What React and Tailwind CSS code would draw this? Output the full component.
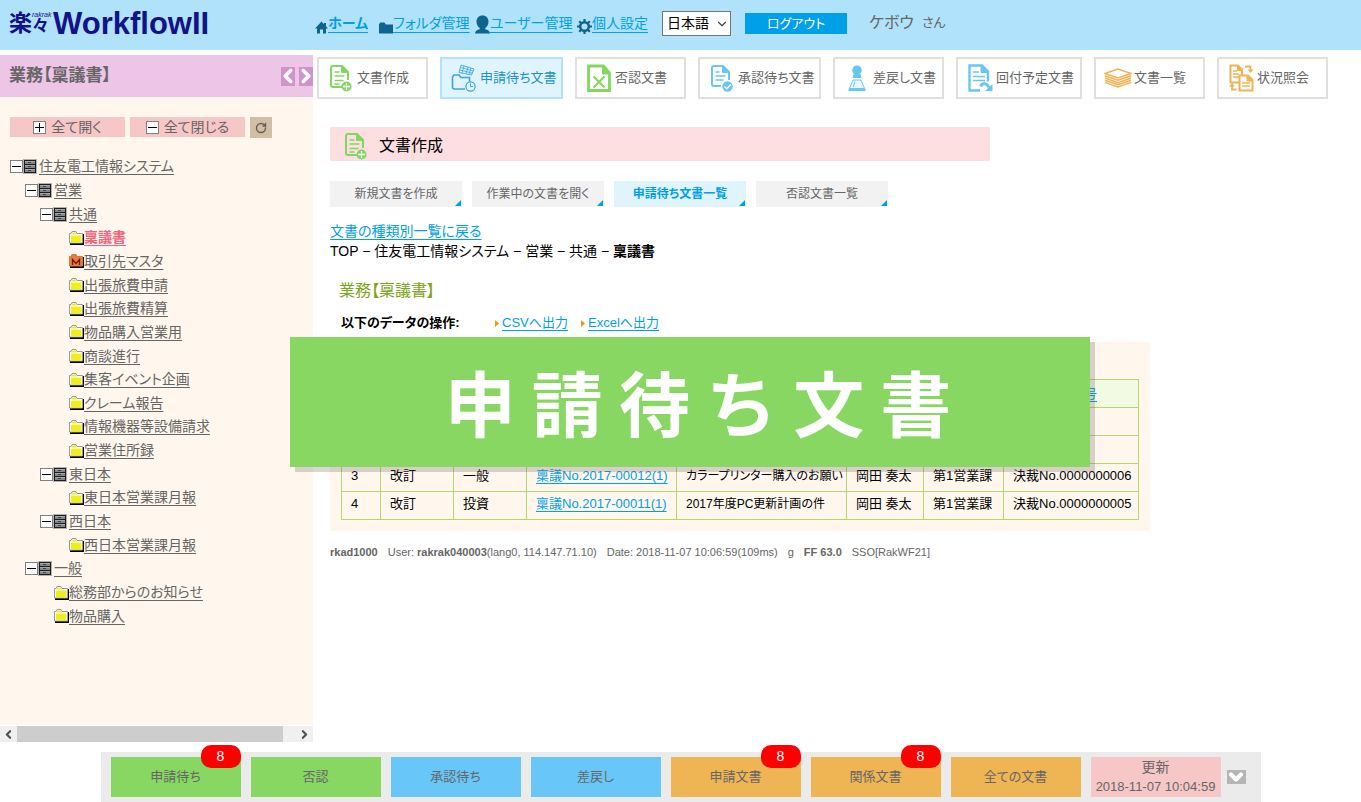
import React from 'react';
import { clsx } from 'clsx';
import { ChevronLeft, ChevronRight, ChevronDown, RotateCw } from 'lucide-react';

const tree = [
  { level: 0, type: 'cabinet', name: '住友電工情報システム' },
  { level: 1, type: 'cabinet', name: '営業' },
  { level: 2, type: 'cabinet', name: '共通' },
  { level: 3, type: 'folder', name: '稟議書', active: true },
  { level: 3, type: 'master', name: '取引先マスタ' },
  { level: 3, type: 'folder', name: '出張旅費申請' },
  { level: 3, type: 'folder', name: '出張旅費精算' },
  { level: 3, type: 'folder', name: '物品購入営業用' },
  { level: 3, type: 'folder', name: '商談進行' },
  { level: 3, type: 'folder', name: '集客イベント企画' },
  { level: 3, type: 'folder', name: 'クレーム報告' },
  { level: 3, type: 'folder', name: '情報機器等設備請求' },
  { level: 3, type: 'folder', name: '営業住所録' },
  { level: 2, type: 'cabinet', name: '東日本' },
  { level: 3, type: 'folder', name: '東日本営業課月報' },
  { level: 2, type: 'cabinet', name: '西日本' },
  { level: 3, type: 'folder', name: '西日本営業課月報' },
  { level: 1, type: 'cabinet', name: '一般' },
  { level: 2, type: 'folder', name: '総務部からのお知らせ' },
  { level: 2, type: 'folder', name: '物品購入' },
];

const indents = ['pl-[10px]', 'pl-[25px]', 'pl-[40px]', 'pl-[69px]'];
const leafIndents = ['pl-[10px]', 'pl-[39px]', 'pl-[54px]', 'pl-[69px]'];

const rows = [
  ['1', '', '', '', '', '', '', ''],
  ['2', '', '', '', '', '', '', ''],
  ['3', '改訂', '一般', '稟議No.2017-00012(1)', 'カラープリンター購入のお願い', '岡田 奏太', '第1営業課', '決裁No.0000000006'],
  ['4', '改訂', '投資', '稟議No.2017-00011(1)', '2017年度PC更新計画の件', '岡田 奏太', '第1営業課', '決裁No.0000000005'],
];

/* ---------- icons ---------- */

const BoxIcon = ({ plus }) => (
  <svg width="13" height="13" viewBox="0 0 13 13" className="shrink-0" shapeRendering="crispEdges">
    <rect x="0.5" y="0.5" width="12" height="12" rx="1" fill="#fff" stroke="#808080" />
    <path d={plus ? 'M2 6.5h9M6.5 2v9' : 'M2 6.5h9'} stroke="#000" />
  </svg>
);

const CabinetIcon = () => (
  <svg width="14" height="15" viewBox="0 0 14 15" className="shrink-0">
    <rect width="14" height="15" fill="#b4b0ac" />
    <rect x="1" y="1" width="12" height="13" fill="#1d1d1f" />
    <path d="M2 2h10v3H2zM2 6h10v3H2zM2 10h10v3H2z" fill="#858588" />
    <path d="M2 2h10v1H2zM2 6h10v1H2zM2 10h10v1H2z" fill="#a7a7aa" />
    <path d="M5 3h3v1H5zM5 7h3v1H5zM5 11h3v1H5z" fill="#30485f" />
  </svg>
);

const FolderIcon = () => (
  <svg width="15" height="14" viewBox="0 0 15 14" className="shrink-0">
    <path d="M1 14h14V3h-2v9H1z" fill="#000" />
    <path d="M0.5 12V2.5H2L3 0.5h4l1 2h5.5V12z" fill="#fff" stroke="#9a9a9a" />
    <path d="M3 1.5h4l1 2h-6z" fill="#e9e64a" />
    <path d="M2 4.500h10.500V11.500H2z" fill="#f2ee1c" />
  </svg>
);

const MasterIcon = () => (
  <svg width="15" height="14" viewBox="0 0 15 14" className="shrink-0">
    <path d="M1 14h14V3h-2v9H1z" fill="#000" />
    <path d="M0.5 12V2.5H2L3 0.5h4l1 2h5.500V12z" fill="#e08040" stroke="#d9763a" />
    <path d="M3.500 11V5.500l3.500 4 3.500-4V11" fill="none" stroke="#8a0f0f" strokeWidth="1.300" />
  </svg>
);

const HomeIcon = () => (
  <svg width="13" height="13" viewBox="0 0 13 13" fill="#0d658f" className="shrink-0">
    <path d="M6.500 0.500L0 7.500h2V12.500h3V8.500h3v4h3v-5h2L11 5.300V2H9v1.200z" />
  </svg>
);

const NavFolderIcon = () => (
  <svg width="14" height="12" viewBox="0 0 14 12" fill="#0d658f" className="shrink-0">
    <path d="M0 11.500V2.200L1.200 0.500h4.300l1.200 2H14v9z" />
  </svg>
);

const UserIcon = () => (
  <svg width="15" height="19" viewBox="0 0 15 19" fill="#0d658f" className="shrink-0">
    <path d="M7.500 0.500c3.800 0 6 2.700 6 6 0 3-1.500 5.500-3.300 6.600v1.200c2.500 0.500 4.500 1.700 4.800 4.200H0c0.300-2.500 2.300-3.700 4.800-4.200v-1.200C3 12 1.500 9.500 1.500 6.500c0-3.300 2.200-6 6-6z" />
  </svg>
);

const GearIcon = () => (
  <svg width="15" height="15" viewBox="0 0 15 15" fill="none" stroke="#0d658f" className="shrink-0">
    <circle cx="7.500" cy="7.500" r="4.300" strokeWidth="2.400" />
    <path d="M7.500 0v3M7.500 12v3M0 7.500h3M12 7.500h3M2.200 2.200l2 2M10.800 10.800l2 2M12.800 2.200l-2 2M4.200 10.800l-2 2" strokeWidth="2.200" />
  </svg>
);

const DocAddIcon = () => (
  <svg width="22" height="27" viewBox="0 0 22 27" fill="none" className="shrink-0">
    <path d="M12 22H3a2 2 0 0 1-2-2V3a2 2 0 0 1 2-2h9l6 6v8" stroke="#82d75f" strokeWidth="2" />
    <path d="M11.500 1.500V7.500H17.500z" fill="#82d75f" stroke="#82d75f" />
    <path d="M4.500 7h5M4.500 11h10M4.500 15.500h9M4.500 19h5" stroke="#82d75f" strokeWidth="1.500" />
    <circle cx="16.500" cy="21.500" r="5" fill="#82d75f" />
    <path d="M16.500 18v7M13 21.500h7" stroke="#fff" strokeWidth="1.300" />
  </svg>
);

const WaitingIcon = () => (
  <svg width="26" height="28" viewBox="0 0 26 28" fill="none" stroke="#3ba5d6" className="shrink-0">
    <path d="M10 1l13 4-2.500 6-12.500-2.500z" fill="#e0f4fe" strokeWidth="0.900" />
    <path d="M10 3.500l12 3.500M9 6l12 3M13 2l-2 7M17 3l-2 7M20 4l-2 6.500" strokeWidth="0.800" />
    <path d="M14 25H3.500a2 2 0 0 1-2-2V13l1.500-2h5l2 2.500h8.500v4" strokeWidth="1.600" />
    <circle cx="19.500" cy="22.500" r="4.600" fill="#e0f4fe" strokeWidth="1.200" />
    <path d="M19.500 19.500v3h2.500" />
  </svg>
);

const RejectIcon = () => (
  <svg width="24" height="28" viewBox="0 0 24 28" fill="none" stroke="#82d75f" className="shrink-0">
    <path d="M1.500 2h15l6 7v17.500h-21z" strokeWidth="2.800" />
    <path d="M15.500 3v7h7z" fill="#82d75f" />
    <path d="M6.500 12.500l11 11M17.500 12.500l-11 11" strokeWidth="2" />
  </svg>
);

const ApproveIcon = () => (
  <svg width="22" height="27" viewBox="0 0 22 27" fill="none" className="shrink-0">
    <path d="M10 21H3a2 2 0 0 1-2-2V3a2 2 0 0 1 2-2h9l6 6v8" stroke="#68c6f5" strokeWidth="2" />
    <path d="M11.500 1.500V7.500H17.500z" fill="#68c6f5" stroke="#68c6f5" />
    <path d="M4.500 7h4M4.500 11h10M4.500 15h8" stroke="#68c6f5" strokeWidth="1.500" />
    <circle cx="16.500" cy="21.500" r="5.200" fill="#68c6f5" />
    <path d="M13.500 21.500l2.300 2.300 4-4.300" stroke="#fff" strokeWidth="1.400" />
  </svg>
);

const StampIcon = () => (
  <svg width="18" height="27" viewBox="0 0 18 27" fill="#68c6f5" className="shrink-0">
    <path d="M9 0.500a4.600 4.600 0 0 1 3.200 8L13.500 13h-9L5.800 8.500A4.600 4.600 0 0 1 9 0.500z" />
    <path d="M5 15h8l3.500 8.500h-15z" fill="#eaf8ff" stroke="#68c6f5" />
    <path d="M7 16.500l-1.800 5.500" stroke="#68c6f5" />
    <path d="M0.500 23.500h17v2.500h-17z" />
  </svg>
);

const CirculateIcon = () => (
  <svg width="25" height="28" viewBox="0 0 25 28" fill="none" className="shrink-0">
    <path d="M12 26.500H1.500V1.500H14l6 6v10" stroke="#68c6f5" strokeWidth="2.400" />
    <path d="M13 2v6.500h7z" fill="#68c6f5" stroke="#68c6f5" />
    <path d="M5 8h6M5 12.500h12M5 16.500h12" stroke="#68c6f5" strokeWidth="1.600" />
    <path d="M12.500 22.500c2-4 6-4 8.500 1" stroke="#68c6f5" strokeWidth="3" />
    <path d="M24.500 20v7h-7.500z" fill="#68c6f5" />
  </svg>
);

const StackIcon = () => (
  <svg width="28" height="20" viewBox="0 0 28 20" fill="none" stroke="#efb254" strokeWidth="1.500" className="shrink-0">
    <path d="M14 1L1 5.500 14 10l13-4.500z" fill="#fff" />
    <path d="M1 7.700L14 12.300l13-4.600M1 10L14 14.600 27 10M1 12.200L14 16.800l13-4.600M1 14.400L14 19l13-4.600" />
  </svg>
);

const StatusIcon = () => (
  <svg width="25" height="28" viewBox="0 0 25 28" fill="none" stroke="#efb254" className="shrink-0">
    <path d="M1.500 1.500H9l4 4v13H1.500z" strokeWidth="2" />
    <path d="M8.500 2v4.500H13z" fill="#efb254" />
    <path d="M4 7h4M4 10h6M4 13h6" strokeWidth="1.300" />
    <path d="M10.500 11.500H19l4.500 4.500v10.500h-13z" fill="#fff" strokeWidth="2" />
    <path d="M18 12v5h5z" fill="#efb254" />
    <path d="M13 19h8M13 22h8" strokeWidth="1.300" />
    <path d="M16 2.500h5.500V6M7.500 25.500H3V22" strokeWidth="1.800" />
    <path d="M18.500 5.500h6l-3 3.500zM0 22.500h6L3 19z" fill="#efb254" stroke="none" />
  </svg>
);

const toolbar = [
  { label: '文書作成', Icon: DocAddIcon, width: 'w-[111px]' },
  { label: '申請待ち文書', Icon: WaitingIcon, width: 'w-[123px]', active: true },
  { label: '否認文書', Icon: RejectIcon, width: 'w-[111px]' },
  { label: '承認待ち文書', Icon: ApproveIcon, width: 'w-[123px]' },
  { label: '差戻し文書', Icon: StampIcon, width: 'w-[111px]' },
  { label: '回付予定文書', Icon: CirculateIcon, width: 'w-[126px]' },
  { label: '文書一覧', Icon: StackIcon, width: 'w-[111px]' },
  { label: '状況照会', Icon: StatusIcon, width: 'w-[111px]' },
];

const shortcuts = [
  { label: '申請待ち', color: 'bg-[#87d762]', count: 8 },
  { label: '否認', color: 'bg-[#87d762]' },
  { label: '承認待ち', color: 'bg-[#69c6f8]' },
  { label: '差戻し', color: 'bg-[#69c6f8]' },
  { label: '申請文書', color: 'bg-[#efb454]', count: 8 },
  { label: '関係文書', color: 'bg-[#efb454]', count: 8 },
  { label: '全ての文書', color: 'bg-[#efb454]' },
];

/* ---------- layout ---------- */

const Header = () => (
  <header className="flex h-[50px] items-center bg-[#b0e2fb] text-[#666]">
    <a href="#top" className="flex w-[315px] items-center pb-1 pl-[9px] leading-none text-[#12128a]">
      <span className="text-[23px] font-bold">楽</span>
      <span className="flex w-[21px] flex-col">
        <span className="text-[7px] leading-[8px] italic">rakrak</span>
        <span className="text-[17px] leading-4 font-bold">々</span>
      </span>
      <span className="text-[31px] font-bold">WorkflowII</span>
    </a>
    <nav className="flex pb-1 text-[14px] text-[#00a0e9]">
      <a href="#home" className="flex w-16 items-end font-bold underline underline-offset-4">
        <HomeIcon />
        ホーム
      </a>
      <a href="#folders" className="flex w-24 items-end underline underline-offset-4">
        <NavFolderIcon />
        フォルダ管理
      </a>
      <a href="#users" className="flex w-[102px] items-end underline underline-offset-4">
        <UserIcon />
        ユーザー管理
      </a>
      <a href="#settings" className="flex w-[85px] items-end underline underline-offset-4">
        <GearIcon />
        個人設定
      </a>
    </nav>
    <div className="flex items-center pb-1">
      <div className="relative mr-[14px]">
        <select aria-label="言語" className="h-[25px] w-[69px] appearance-none border border-[#767676] bg-white pl-1 text-[14px] text-black">
          <option>日本語</option>
        </select>
        <ChevronDown size={14} className="pointer-events-none absolute top-[6px] right-[2px] text-[#444]" />
      </div>
      <button className="mr-[22px] h-[21px] w-[102px] bg-[#00a0e9] text-[13px] leading-none text-white">ログアウト</button>
      <span className="mr-2 text-[16px]">ケボウ</span>
      <span className="text-[13px]">さん</span>
    </div>
  </header>
);

const Sidebar = () => (
  <aside className="flex w-[313px] shrink-0 flex-col">
    <div className="flex h-[42px] items-center justify-between bg-[#edc5e7] pl-[9px]">
      <h2 className="text-[17px] font-bold text-[#666]">業務【稟議書】</h2>
      <div className="flex gap-1">
        <button aria-label="縮める" className="flex h-[19px] w-[14px] items-center justify-center bg-[#cf95cb] text-white">
          <ChevronLeft size={22} strokeWidth={4} className="shrink-0" />
        </button>
        <button aria-label="広げる" className="flex h-[19px] w-[14px] items-center justify-center bg-[#cf95cb] text-white">
          <ChevronRight size={22} strokeWidth={4} className="shrink-0" />
        </button>
      </div>
    </div>
    <div className="flex-1 bg-[#fff7ed] pt-5 text-[14px] text-[#666]">
      <div className="flex gap-[5px] pl-[10px]">
        <button className="flex h-5 w-[115px] items-center justify-center gap-[5px] bg-[#f7c6c6]">
          <BoxIcon plus />
          全て開く
        </button>
        <button className="flex h-5 w-[115px] items-center justify-center gap-[5px] bg-[#f7c6c6]">
          <BoxIcon />
          全て閉じる
        </button>
        <button aria-label="再読込" className="flex h-[21px] w-[22px] items-center justify-center bg-[#d1bfa5] text-[#6b6155]">
          <RotateCw size={12} strokeWidth={3} />
        </button>
      </div>
      <ul className="mt-[17px] grid h-[473px] auto-rows-fr">
        {tree.map(({ level, type, name, active }, i) => (
          <li key={i} className={clsx('flex items-center', type === 'cabinet' ? indents[level] : leafIndents[level])}>
            {type === 'cabinet' && <BoxIcon />}
            {type === 'cabinet' && <CabinetIcon />}
            {type === 'folder' && <FolderIcon />}
            {type === 'master' && <MasterIcon />}
            <a
              href="#folder"
              className={clsx(
                'underline underline-offset-3',
                type === 'cabinet' && 'ml-[2px]',
                active && 'font-bold text-[#f0647d]'
              )}
            >
              {name}
            </a>
          </li>
        ))}
      </ul>
    </div>
    <div className="mt-px flex h-4 items-center justify-between bg-[#f0f0f0] px-[2px] text-[#505050]">
      <ChevronLeft size={13} strokeWidth={4} />
      <div className="ml-[2px] h-full w-[266px] bg-[#cdcdcd]" />
      <ChevronRight size={13} strokeWidth={4} className="ml-auto" />
    </div>
  </aside>
);

const Toolbar = () => (
  <nav className="flex gap-3 pt-[2px] pl-1">
    {toolbar.map(({ label, Icon, width, active }) => (
      <button
        key={label}
        className={clsx(
          'flex h-[42px] shrink-0 items-center gap-[2px] border-2 pl-2 text-[13px] whitespace-nowrap',
          width,
          active ? 'border-[#b0e2fb] bg-[#e0f4fe] text-[#2092c8]' : 'border-[#e0e0e0] bg-white text-[#666]'
        )}
      >
        <span className="flex w-7 shrink-0 justify-center">
          <Icon />
        </span>
        {label}
      </button>
    ))}
  </nav>
);

const Tab = ({ children, active }) => (
  <button
    className={clsx(
      'relative h-[26px] w-[132px] text-[12px]',
      active ? 'bg-[#e0f4fe] font-bold text-[#00a0e9]' : 'bg-[#f2f2f2] text-[#666]'
    )}
  >
    {children}
    <svg width="6" height="6" viewBox="0 0 6 6" className="absolute right-px bottom-px">
      <path d="M6 0v6H0z" fill="#00a0e9" />
    </svg>
  </button>
);

const ExportLink = ({ children }) => (
  <a href="#export" className="flex w-[86px] items-center gap-[3px] text-[#00a0e9]">
    <svg width="4" height="7" viewBox="0 0 4 7" className="shrink-0">
      <path d="M0 0l4 3.500L0 7z" fill="#f39800" />
    </svg>
    <span className="underline underline-offset-3">{children}</span>
  </a>
);

const DocumentTable = () => (
  <div className="mt-[9px] w-[820px] bg-[#fff7ed] px-[11px] pt-[37px] pb-[11px]">
    <table className="w-full table-fixed border-collapse text-left text-[13px] leading-4 whitespace-nowrap text-black">
      <colgroup>
        <col className="w-[39px]" />
        <col className="w-[73px]" />
        <col className="w-[73px]" />
        <col className="w-[150px]" />
        <col className="w-[170px]" />
        <col className="w-[77px]" />
        <col className="w-[80px]" />
        <col />
      </colgroup>
      <thead>
        <tr className="h-7 bg-[#f3fae4]">
          <th colSpan={7} className="border border-[#b2d76a]" />
          <th className="border border-[#b2d76a] text-center font-normal">
            <a href="#sort" className="text-[#00a0e9] underline underline-offset-3">決裁番号</a>
          </th>
        </tr>
      </thead>
      <tbody>
        {rows.map((row) => (
          <tr key={row[0]} className="h-7">
            {row.map((cell, i) => (
              <td key={i} className={clsx('border border-[#b2d76a] px-[9px] pb-1', i === 4 && 'text-[12px]')}>
                {i === 3 && cell ? (
                  <a href="#document" className="text-[#00a0e9] underline underline-offset-3">{cell}</a>
                ) : (
                  cell
                )}
              </td>
            ))}
          </tr>
        ))}
      </tbody>
    </table>
  </div>
);

const Footer = () => (
  <footer className="mx-auto mt-[10px] flex h-[50px] w-[1160px] items-center gap-[10px] bg-[#ebebeb] pl-[10px] text-[13px] text-[#666]">
    {shortcuts.map(({ label, color, count }) => (
      <button key={label} className={clsx('relative h-10 w-[130px]', color)}>
        {label}
        {count && (
          <span className="absolute -top-3 right-0 flex h-[23px] w-10 items-center justify-center rounded-[10px] bg-[#ff0000] text-[14px] text-white">
            {count}
          </span>
        )}
      </button>
    ))}
    <button className="h-10 w-[130px] bg-[#f7c6c6] leading-5 whitespace-nowrap">
      <span className="block text-[14px]">更新</span>
      <span className="block">2018-11-07 10:04:59</span>
    </button>
    <button aria-label="閉じる" className="-ml-1 flex h-[14px] w-[19px] items-center justify-center bg-[#b5b5b5] text-white">
      <ChevronDown size={20} strokeWidth={5} className="shrink-0" />
    </button>
  </footer>
);

const App = () => (
  <div className="relative flex min-h-screen flex-col overflow-x-hidden bg-white font-['Liberation_Sans','Noto_Sans_CJK_JP',sans-serif] [font-feature-settings:'palt']">
    <Header />
    <div className="mt-[5px] flex flex-1">
      <Sidebar />
      <main className="min-w-0 flex-1">
        <Toolbar />
        <div className="pl-[17px]">
          <div className="mt-7 flex h-[34px] w-[660px] items-center bg-[#fddfe1] pt-[6px] pb-[2px] pl-[15px]">
            <DocAddIcon />
            <h1 className="ml-3 text-[16px] text-black">文書作成</h1>
          </div>
          <div className="mt-5 flex gap-[10px]">
            <Tab>新規文書を作成</Tab>
            <Tab>作業中の文書を開く</Tab>
            <Tab active>申請待ち文書一覧</Tab>
            <Tab>否認文書一覧</Tab>
          </div>
          <div className="mt-[14px] text-[14px] leading-5 text-black">
            <a href="#types" className="text-[#00a0e9] underline underline-offset-3">文書の種類別一覧に戻る</a>
            <p>
              TOP − 住友電工情報システム − 営業 − 共通 − <b>稟議書</b>
            </p>
          </div>
          <h2 className="mt-[18px] ml-[9px] text-[16px] leading-6 text-[#7ba51b]">業務【稟議書】</h2>
          <div className="mt-[10px] ml-[11px] flex h-5 items-center text-[13px]">
            <span className="w-[154px] font-bold text-black">以下のデータの操作:</span>
            <ExportLink>CSVへ出力</ExportLink>
            <ExportLink>Excelへ出力</ExportLink>
          </div>
          <DocumentTable />
          <p className="mt-[11px] flex gap-[10px] text-[11px] leading-5 text-[#666]">
            <b>rkad1000</b>
            <span>User: <b>rakrak040003</b>(lang0, 114.147.71.10)</span>
            <span>Date: 2018-11-07 10:06:59(109ms)</span>
            <span>g</span>
            <b>FF 63.0</b>
            <span>SSO[RakWF21]</span>
          </p>
        </div>
      </main>
    </div>
    <Footer />

    {/* Section title banner over the page */}
    <div className="absolute top-[337px] left-[290px] flex h-[130px] w-[800px] items-center justify-center bg-[#87d762] pb-1 pl-4 text-[71px] font-bold whitespace-nowrap text-white shadow-[5px_5px_0_rgba(100,90,90,0.25)] font-['Noto_Sans_CJK_JP',sans-serif] [font-feature-settings:normal]">
      申 請 待 ち 文 書
    </div>
  </div>
);

export default App;
